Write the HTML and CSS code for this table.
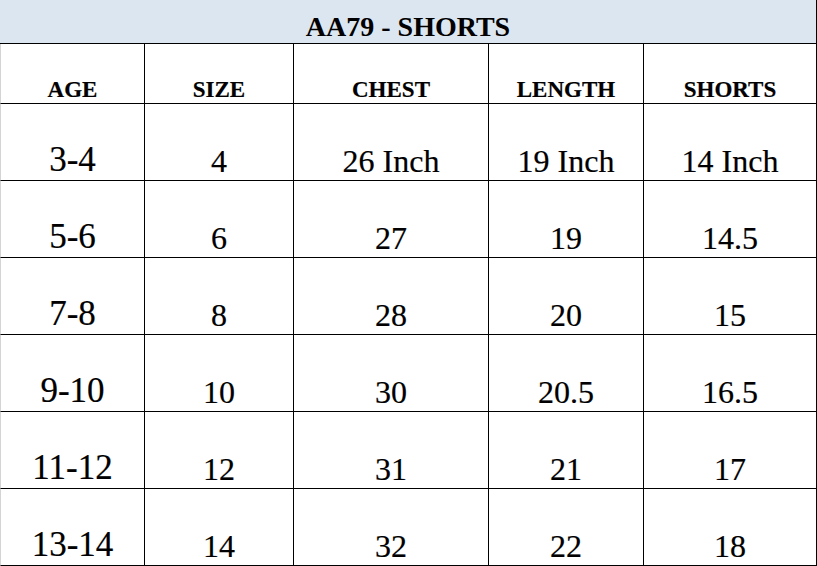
FILE: index.html
```html
<!DOCTYPE html>
<html>
<head>
<meta charset="utf-8">
<title>AA79 - SHORTS</title>
<link rel="stylesheet" href="styles.css">
</head>
<body>
<div class="sheet">
  <div class="title">AA79 - SHORTS</div>
  <div class="grid">
    <div class="cell head first">AGE</div>
    <div class="cell head">SIZE</div>
    <div class="cell head">CHEST</div>
    <div class="cell head">LENGTH</div>
    <div class="cell head">SHORTS</div>

    <div class="cell age first">3-4</div>
    <div class="cell val">4</div>
    <div class="cell val">26 Inch</div>
    <div class="cell val">19 Inch</div>
    <div class="cell val">14 Inch</div>

    <div class="cell age first">5-6</div>
    <div class="cell val">6</div>
    <div class="cell val">27</div>
    <div class="cell val">19</div>
    <div class="cell val">14.5</div>

    <div class="cell age first">7-8</div>
    <div class="cell val">8</div>
    <div class="cell val">28</div>
    <div class="cell val">20</div>
    <div class="cell val">15</div>

    <div class="cell age first">9-10</div>
    <div class="cell val">10</div>
    <div class="cell val">30</div>
    <div class="cell val">20.5</div>
    <div class="cell val">16.5</div>

    <div class="cell age first">11-12</div>
    <div class="cell val">12</div>
    <div class="cell val">31</div>
    <div class="cell val">21</div>
    <div class="cell val">17</div>

    <div class="cell age first">13-14</div>
    <div class="cell val">14</div>
    <div class="cell val">32</div>
    <div class="cell val">22</div>
    <div class="cell val">18</div>
  </div>
</div>
</body>
</html>
```
FILE: styles.css
```css
* {
  box-sizing: border-box;
}

html, body {
  margin: 0;
  padding: 0;
  background: #ffffff;
}

.sheet {
  width: 817px;
  height: 566px;
  font-family: "Liberation Serif", "Times New Roman", serif;
  color: #000000;
}

.title {
  height: 44px;
  background: #dce6f1;
  border-bottom: 1px solid #000000;
  border-right: 1px solid #000000;
  display: flex;
  align-items: flex-end;
  justify-content: center;
  font-size: 28px;
  font-weight: bold;
  line-height: 1;
  padding-bottom: 2px;
}

.grid {
  display: grid;
  grid-template-columns: 145px 149px 195px 155px 173px;
  grid-template-rows: 60px repeat(6, 77px);
}

.cell {
  border-right: 1px solid #000000;
  border-bottom: 1px solid #000000;
  display: flex;
  align-items: flex-end;
  justify-content: center;
  line-height: 1;
  white-space: nowrap;
  -webkit-text-stroke: 0.2px #000000;
}

.first {
  border-left: 1px solid #d4d4d4;
}

.head {
  font-size: 23px;
  font-weight: bold;
  padding-bottom: 2px;
}

.age {
  font-size: 35px;
  padding-bottom: 3px;
}

.val {
  font-size: 32px;
  padding-bottom: 3px;
}
```
